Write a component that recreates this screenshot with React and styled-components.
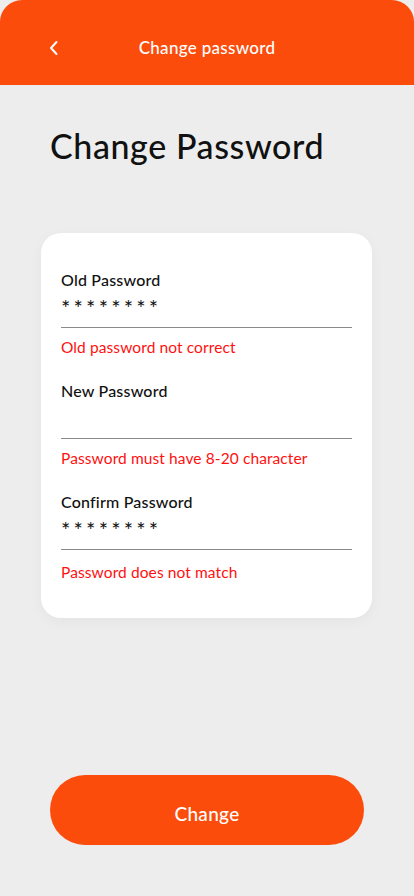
import React from 'react';
import styled, { createGlobalStyle } from 'styled-components';

const GlobalStyle = createGlobalStyle`
  html, body {
    margin: 0;
    padding: 0;
    background: #ededed;
  }
  * {
    box-sizing: border-box;
  }
`;

const Screen = styled.div`
  width: 414px;
  height: 896px;
  display: flex;
  flex-direction: column;
  background: #ededed;
  font-family: Lato, "Noto Sans", sans-serif;
  color: #111;
`;

const TopBar = styled.header`
  height: 85px;
  flex-shrink: 0;
  background: #fc4c0c;
  border-radius: 22px 22px 0 0;
  display: grid;
  grid-template-columns: 80px 1fr 80px;
  align-items: center;
  padding-top: 10px;
`;

const BackButton = styled.button`
  border: none;
  background: none;
  padding: 0 0 0 49px;
  display: flex;
  align-items: center;
  cursor: pointer;
`;

const TopTitle = styled.h2`
  margin: 0;
  text-align: center;
  color: #fff;
  font-size: 17px;
  font-weight: 500;
  letter-spacing: 0.3px;
`;

const PageTitle = styled.h1`
  margin: 41px 0 0 50px;
  font-size: 34px;
  font-weight: 500;
  line-height: 40px;
  letter-spacing: 0.6px;
  color: #111;
`;

const Card = styled.section`
  margin: 67px 42px 0 41px;
  background: #fff;
  border-radius: 20px;
  padding: 37px 20px 37px;
  box-shadow: 0 4px 14px rgba(0, 0, 0, 0.04);
`;

const Field = styled.div`
  & + & {
    margin-top: 25px;
  }
`;

const Label = styled.div`
  font-size: 16px;
  line-height: 20px;
  font-weight: 500;
  letter-spacing: 0.2px;
`;

const Value = styled.div`
  margin-top: 4px;
  height: 20px;
  box-sizing: content-box;
  padding: 4px 0 9px;
  border-bottom: 1px solid #8a8a8a;
  font-size: 22px;
  line-height: 20px;
  letter-spacing: 3.2px;
`;

const ErrorText = styled.div`
  margin-top: ${(p) => (p.$last ? 13 : 10)}px;
  font-size: 15.5px;
  line-height: 18px;
  color: #ff1010;
  letter-spacing: 0.1px;
`;

const Footer = styled.div`
  margin-top: auto;
  padding: 0 50px 51px;
`;

const PrimaryButton = styled.button`
  width: 100%;
  height: 70px;
  border: none;
  border-radius: 35px;
  background: #fc4c0c;
  color: #fff;
  font-family: Lato, "Noto Sans", sans-serif;
  font-size: 19px;
  font-weight: 500;
  padding-top: 7px;
  letter-spacing: 0.3px;
  cursor: pointer;
`;

const fields = [
  { label: 'Old Password', value: '********', error: 'Old password not correct' },
  { label: 'New Password', value: '', error: 'Password must have 8-20 character' },
  { label: 'Confirm Password', value: '********', error: 'Password does not match' },
];

export default function App() {
  return (
    <Screen>
      <GlobalStyle />
      <TopBar>
        <BackButton aria-label="Back">
          <svg width="10" height="16" viewBox="0 0 10 16" fill="none">
            <path d="M7.5 2 L2 8 L7.5 14" stroke="#fff" strokeWidth="2" strokeLinecap="round" strokeLinejoin="round" />
          </svg>
        </BackButton>
        <TopTitle>Change password</TopTitle>
        <div />
      </TopBar>

      <PageTitle>Change Password</PageTitle>

      <Card>
        {fields.map((f, i) => (
          <Field key={f.label}>
            <Label>{f.label}</Label>
            <Value>{f.value}</Value>
            <ErrorText $last={i === fields.length - 1}>{f.error}</ErrorText>
          </Field>
        ))}
      </Card>

      <Footer>
        <PrimaryButton>Change</PrimaryButton>
      </Footer>
    </Screen>
  );
}
